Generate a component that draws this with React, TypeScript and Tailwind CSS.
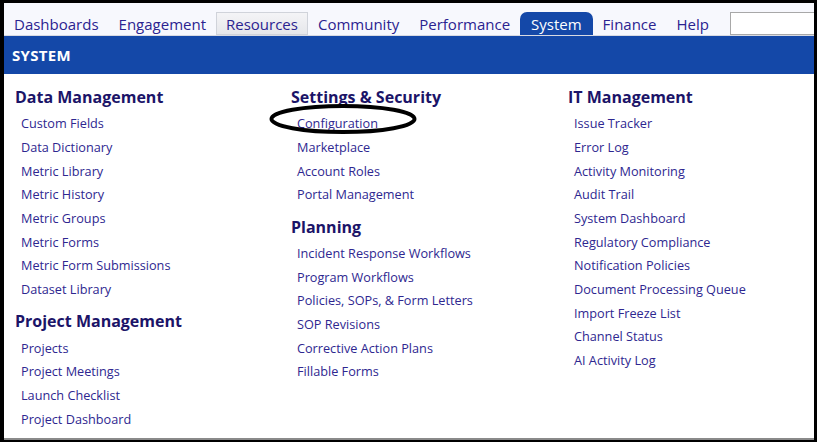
import React from "react";

type Section = { title: string; links: string[] };

const columns: Section[][] = [
  [
    {
      title: "Data Management",
      links: [
        "Custom Fields",
        "Data Dictionary",
        "Metric Library",
        "Metric History",
        "Metric Groups",
        "Metric Forms",
        "Metric Form Submissions",
        "Dataset Library",
      ],
    },
    {
      title: "Project Management",
      links: ["Projects", "Project Meetings", "Launch Checklist", "Project Dashboard"],
    },
  ],
  [
    {
      title: "Settings & Security",
      links: ["Configuration", "Marketplace", "Account Roles", "Portal Management"],
    },
    {
      title: "Planning",
      links: [
        "Incident Response Workflows",
        "Program Workflows",
        "Policies, SOPs, & Form Letters",
        "SOP Revisions",
        "Corrective Action Plans",
        "Fillable Forms",
      ],
    },
  ],
  [
    {
      title: "IT Management",
      links: [
        "Issue Tracker",
        "Error Log",
        "Activity Monitoring",
        "Audit Trail",
        "System Dashboard",
        "Regulatory Compliance",
        "Notification Policies",
        "Document Processing Queue",
        "Import Freeze List",
        "Channel Status",
        "AI Activity Log",
      ],
    },
  ],
];

const tabs = ["Dashboards", "Engagement", "Resources", "Community", "Performance", "System", "Finance", "Help"];

function NavTab({ label }: { label: string }) {
  if (label === "System") {
    return (
      <div className="h-[23px] px-[11px] pt-[2px] rounded-t-[7px] bg-[#1448a8] text-white flex items-center">
        {label}
      </div>
    );
  }
  if (label === "Resources") {
    return (
      <div className="h-[23px] px-[9px] pt-[2px] border border-[#d0d3da] bg-gradient-to-b from-[#f4f4f6] to-[#e6e7eb] text-[#2b2390] flex items-center">
        {label}
      </div>
    );
  }
  return <div className="h-[23px] px-[10px] pt-[2px] text-[#2b2390] flex items-center">{label}</div>;
}

function MenuSection({ section, first }: { section: Section; first: boolean }) {
  return (
    <div className={first ? "" : "mt-[8px]"}>
      <div className="h-[24px] flex items-center text-[16px] font-bold text-[#1b1468] leading-none">
        {section.title}
      </div>
      <ul className="pl-[6px] pt-[3px]">
        {section.links.map((l) => (
          <li key={l} className="h-[23.65px] flex items-center text-[12.7px] text-[#2e2790] leading-none relative">
            {l}
            {l === "Configuration" && (
              <svg className="absolute left-[-28px] top-[-9px]" width="150" height="34" viewBox="0 0 150 34">
                <ellipse cx="74" cy="16" rx="71.5" ry="13" fill="none" stroke="#000" strokeWidth="4" />
              </svg>
            )}
          </li>
        ))}
      </ul>
    </div>
  );
}

export default function App() {
  return (
    <div
      className="w-[817px] h-[442px] bg-black pt-[3px] pl-[4px] pr-[3px] pb-[2px] overflow-hidden"
      style={{ fontFamily: '"Open Sans", "Noto Sans", sans-serif' }}
    >
      <div className="h-full bg-white flex flex-col border-b-[2px] border-[#8a8a8a]">
        {/* top navigation */}
        <div className="h-[33px] bg-[#f7f8fd] flex items-end text-[15px] border-b border-[#d8dae2]">
          {tabs.map((t) => (
            <NavTab key={t} label={t} />
          ))}
          <div className="ml-[11px] flex-1 h-[23px] border border-[#a8a8a8] border-r-0 bg-white" />
        </div>

        {/* section banner */}
        <div className="h-[38px] bg-[#1448a8] flex items-center pl-[8px] text-white font-bold text-[15px] tracking-[0.3px]">
          SYSTEM
        </div>

        {/* menu columns */}
        <div className="grid grid-cols-[276px_277px_1fr] pl-[11px] pt-[11px]">
          {columns.map((col, i) => (
            <div key={i}>
              {col.map((s, j) => (
                <MenuSection key={s.title} section={s} first={j === 0} />
              ))}
            </div>
          ))}
        </div>
      </div>
    </div>
  );
}
